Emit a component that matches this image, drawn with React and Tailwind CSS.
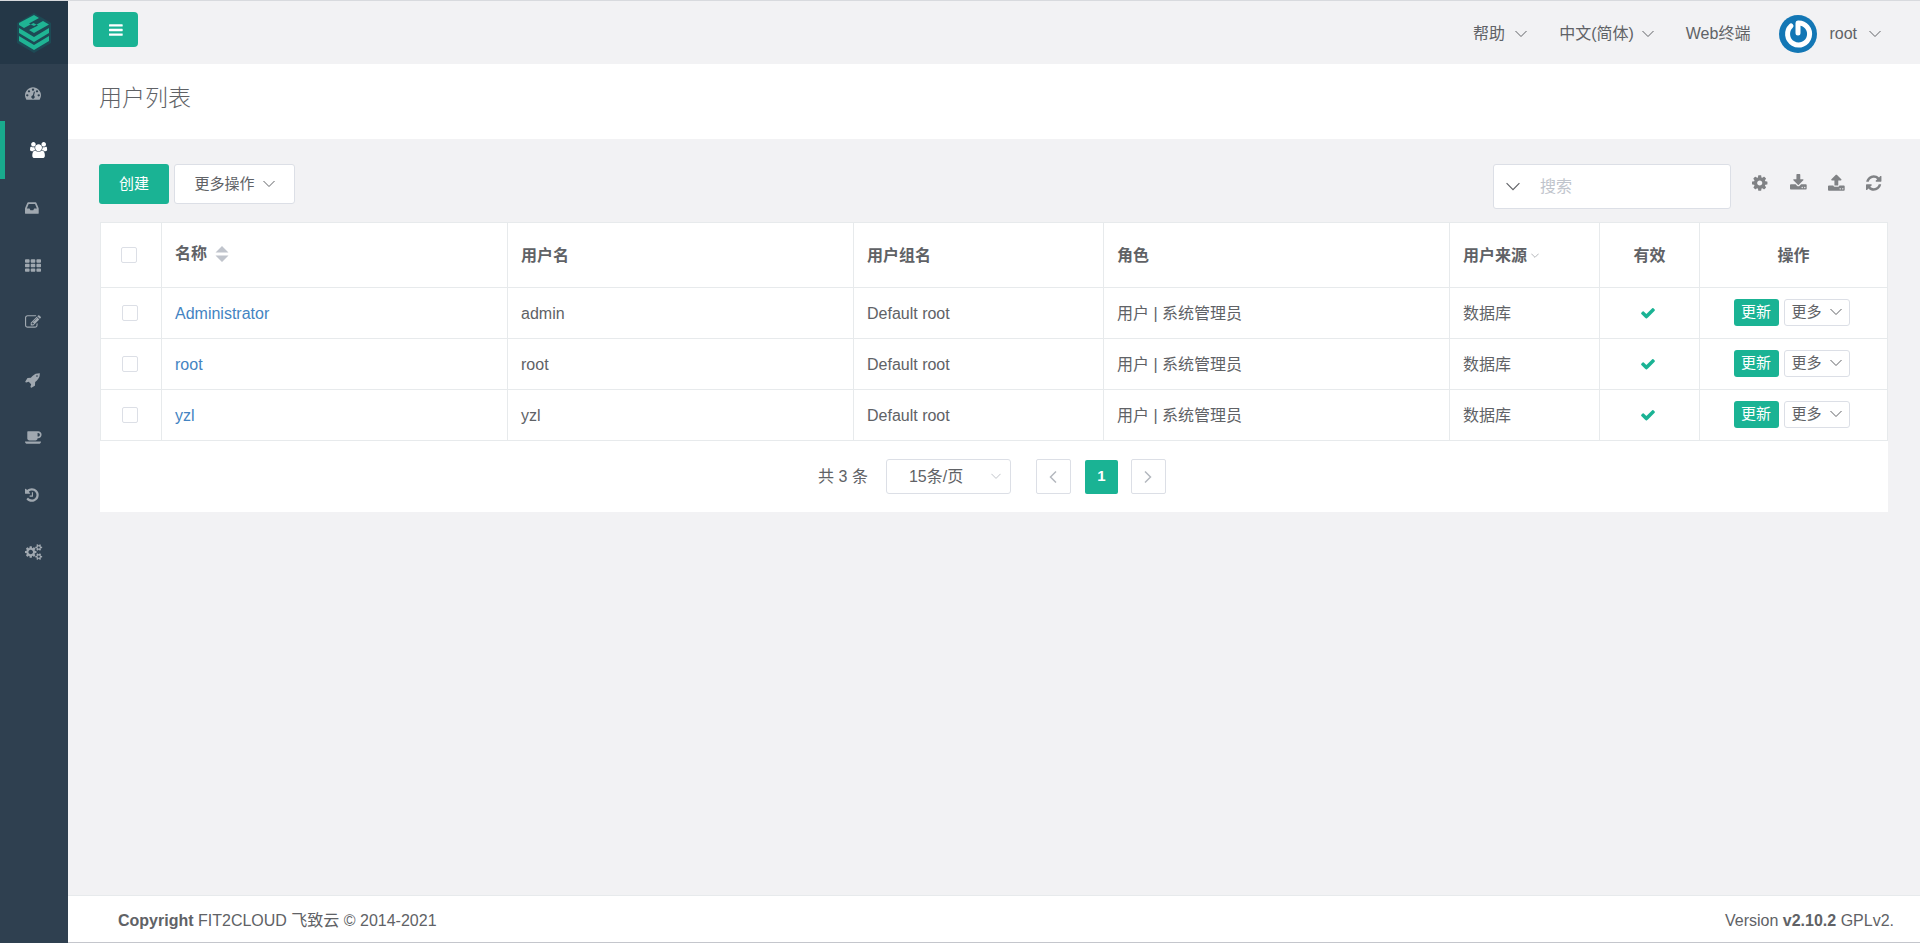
import React, { useState } from 'react';

const FONT = 'font-["Liberation_Sans","Noto_Sans_CJK_SC",sans-serif]';

const DISC = 'q0-53-37.5-90.5t-90.5-37.5-90.5 37.5-37.5 90.5 37.5 90.5 90.5 37.5 90.5-37.5 37.5-90.5z';
const SMALL_COG = 'v140q0 16-149 31-12 27-30 52 51 113 51 138 0 4-4 7-122 71-124 71-8 0-46-47t-52-68q-20 2-30 2t-30-2q-14 21-52 68t-46 47q-2 0-124-71-4-3-4-7 0-25 51-138-18-25-30-52-149-15-149-31v-140q0-16 149-31 13-29 30-52-51-113-51-138 0-4 4-7 4-2 35-20t59-34 30-16q8 0 46 46.5t52 67.5q20-2 30-2t30 2q51-71 92-112l6-2q4 0 124 70 4 3 4 7 0 25-51 138 17 23 30 52 149 15 149 31z';
const LED = 'q0-26-19-45t-45-19-45 19-19 45 19 45 45 19 45-19 19-45z';

const ICONS = {
    dashboard: {
        width: 1792,
        d: `M384 1152${DISC}m192-448${DISC}m428 481l101-382q6-26-7.5-48.5t-38.5-29.5-48 6.5-30 39.5l-101 382q-60 5-107 43.5t-63 98.5q-20 77 20 146t117 89 146-20 89-117q16-60-6-117t-72-91zm660-33${DISC}m-640-640${DISC}m448 192${DISC}m320 448q0 261-141 483-19 29-54 29h-1402q-35 0-54-29-141-221-141-483 0-182 71-348t191-286 286-191 348-71 348 71 286 191 191 286 71 348z`,
    },
    users: {
        width: 1920,
        d: 'M593 896q-162 5-265 128h-134q-82 0-138-40.5t-56-118.5q0-353 124-353 6 0 43.5 21t97.5 42.5 119 21.5q67 0 133-23-5 37-5 66 0 139 81 256zm1071 637q0 120-73 189.5t-194 69.5h-874q-121 0-194-69.5t-73-189.5q0-53 3.5-103.5t14-109 26.5-108.5 43-97.5 62-81 85.5-53.5 111.5-20q10 0 43 21.5t73 48 107 48 135 21.5 135-21.5 107-48 73-48 43-21.5q61 0 111.5 20t85.5 53.5 62 81 43 97.5 26.5 108.5 14 109 3.5 103.5zm-1024-1277q0 106-75 181t-181 75-181-75-75-181 75-181 181-75 181 75 75 181zm704 384q0 159-112.5 271.5t-271.5 112.5-271.5-112.5-112.5-271.5 112.5-271.5 271.5-112.5 271.5 112.5 112.5 271.5zm576 225q0 78-56 118.5t-138 40.5h-134q-103-123-265-128 81-117 81-256 0-29-5-66 66 23 133 23 59 0 119-21.5t97.5-42.5 43.5-21q124 0 124 353zm-128-609q0 106-75 181t-181 75-181-75-75-181 75-181 181-75 181 75 75 181z',
    },
    inbox: {
        width: 1536,
        x: 128,
        d: 'M1151 960h316q-1-3-2.5-8.5t-2.5-7.5l-212-496h-708l-212 496q-1 3-2.5 8.5t-2.5 7.5h316l95 192h320zm513 30v482q0 26-19 45t-45 19h-1408q-26 0-45-19t-19-45v-482q0-62 25-123l238-552q10-25 36.5-42t52.5-17h832q26 0 52.5 17t36.5 42l238 552q25 61 25 123z',
    },
    grid: {
        width: 1792,
        d: [256, 768, 1280].map((y) => [0, 640, 1280].map((x) => `M${x + 96} ${y}h320q40 0 68 28t28 68v192q0 40-28 68t-68 28h-320q-40 0-68-28t-28-68v-192q0-40 28-68t68-28z`).join('')).join(''),
    },
    edit: {
        width: 1792,
        d: 'M888 1184l116-116-152-152-116 116v56h96v96h56zm440-720q-16-16-33 1l-350 350q-17 17-1 33t33-1l350-350q17-17 1-33zm80 594v190q0 119-84.5 203.5t-203.5 84.5h-832q-119 0-203.5-84.5t-84.5-203.5v-832q0-119 84.5-203.5t203.5-84.5h832q63 0 117 25 15 7 18 23 3 17-9 29l-49 49q-14 14-32 8-23-6-45-6h-832q-66 0-113 47t-47 113v832q0 66 47 113t113 47h832q66 0 113-47t47-113v-126q0-13 9-22l64-64q15-15 35-7t20 29zm-96-738l288 288-672 672h-288v-288zm444 132l-92 92-288-288 92-92q28-28 68-28t68 28l152 152q28 28 28 68t-28 68z',
    },
    rocket: {
        width: 1664,
        d: 'M1440 448q0-40-28-68t-68-28-68 28-28 68 28 68 68 28 68-28 28-68zm224-288q0 249-75.5 430.5t-253.5 360.5q-81 80-195 176l-20 379q-2 16-16 26l-384 224q-7 4-16 4-12 0-23-9l-64-64q-13-14-8-32l85-276-281-281-276 85q-3 1-9 1-14 0-23-9l-64-64q-17-19-5-39l224-384q10-14 26-16l379-20q96-114 176-195 188-187 358-258t431-71q14 0 24 9.5t10 22.5z',
    },
    coffee: {
        width: 1920,
        d: 'M1664 640q0-80-56-136t-136-56h-64v384h64q80 0 136-56t56-136zm-1664 768h1792q0 106-75 181t-181 75h-1280q-106 0-181-75t-75-181zm1856-768q0 159-112.5 271.5t-271.5 112.5h-64v32q0 92-66 158t-158 66h-704q-92 0-158-66t-66-158v-736q0-26 19-45t45-19h1152q159 0 271.5 112.5t112.5 271.5z',
    },
    history: {
        width: 1536,
        x: 128,
        d: 'M1664 896q0 156-61 298t-164 245-245 164-298 61q-172 0-327-72.5t-264-204.5q-7-10-6.5-22.5t8.5-20.5l137-138q10-9 25-9 16 2 23 12 73 95 179 147t225 52q104 0 198.5-40.5t163.5-109.5 109.5-163.5 40.5-198.5-40.5-198.5-109.5-163.5-163.5-109.5-198.5-40.5q-98 0-188 35.5t-160 101.5l137 138q31 30 14 69-17 40-59 40h-448q-26 0-45-19t-19-45v-448q0-42 40-59 39-17 69 14l130 129q107-101 244.5-156.5t284.5-55.5q156 0 298 61t245 164 164 245 61 298zm-640-288v448q0 14-9 23t-23 9h-320q-14 0-23-9t-9-23v-64q0-14 9-23t23-9h224v-352q0-14 9-23t23-9h64q14 0 23 9t9 23z',
    },
    cogs: {
        width: 1920,
        d: `M896 896q0-106-75-181t-181-75-181 75-75 181 75 181 181 75 181-75 75-181zm768 512q0-52-38-90t-90-38-90 38-38 90q0 53 37.5 90.5t90.5 37.5 90.5-37.5 37.5-90.5zm0-1024q0-52-38-90t-90-38-90 38-38 90q0 53 37.5 90.5t90.5 37.5 90.5-37.5 37.5-90.5zm-384 421v185q0 10-7 19.5t-16 10.5l-155 24q-11 35-32 76 34 48 90 115 7 10 7 20 0 12-7 19-23 30-82.5 89.5t-78.5 59.5q-11 0-21-7l-115-90q-37 19-77 31-11 108-23 155-7 24-30 24h-186q-11 0-20-7.5t-10-17.5l-23-153q-34-10-75-31l-118 89q-7 7-20 7-11 0-21-8-144-133-144-160 0-9 7-19 10-14 41-53t47-61q-23-44-35-82l-152-24q-10-1-17-9.5t-7-19.5v-185q0-10 7-19.5t16-10.5l155-24q11-35 32-76-34-48-90-115-7-11-7-20 0-12 7-20 22-30 82-89t79-59q11 0 21 7l115 90q34-18 77-32 11-108 23-154 7-24 30-24h186q11 0 20 7.5t10 17.5l23 153q34 10 75 31l118-89q8-7 20-7 11 0 21 8 144 133 144 160 0 9-7 19-12 16-42 54t-45 60q23 48 34 82l152 23q10 2 17 10.5t7 19.5zm640 533${SMALL_COG}M1920 314${SMALL_COG}`,
    },
    bars: {
        width: 1536,
        x: 128,
        d: [1344, 832, 320].map((y) => `M1664 ${y}v128q0 26-19 45t-45 19h-1408q-26 0-45-19t-19-45v-128q0-26 19-45t45-19h1408q26 0 45 19t19 45z`).join(''),
    },
    cog: {
        width: 1536,
        x: 128,
        d: 'M1152 896q0-106-75-181t-181-75-181 75-75 181 75 181 181 75 181-75 75-181zm512-109v222q0 12-8 23t-20 13l-185 28q-19 54-39 91 35 50 107 138 10 12 10 25t-9 23q-27 37-99 108t-94 71q-12 0-26-9l-138-108q-44 23-91 38-16 136-29 186-7 28-36 28h-222q-14 0-24.5-8.5t-11.5-21.5l-28-184q-49-16-90-37l-141 107q-10 9-25 9-14 0-25-11-126-114-165-168-7-10-7-23 0-12 8-23 15-21 51-66.5t54-70.5q-27-50-41-99l-183-27q-13-2-21-12.5t-8-23.5v-222q0-12 8-23t19-13l186-28q14-46 39-92-40-57-107-138-10-12-10-24 0-10 9-23 26-36 98.5-107.5t94.5-71.5q13 0 26 10l138 107q44-23 91-38 16-136 29-186 7-28 36-28h222q14 0 24.5 8.5t11.5 21.5l28 184q49 16 90 37l142-107q9-9 24-9 13 0 25 10 129 119 165 170 7 8 7 22 0 12-8 23-15 21-51 66.5t-54 70.5q26 50 41 98l183 28q13 2 21 12.5t8 23.5z',
    },
    download: {
        width: 1664,
        x: 64,
        d: `M1344 1344${LED}m256 0${LED}m128-224v320q0 40-28 68t-68 28h-1472q-40 0-68-28t-28-68v-320q0-40 28-68t68-28h465l135 136q58 56 136 56t136-56l136-136h464q40 0 68 28t28 68zm-325-569q17 41-14 70l-448 448q-18 19-45 19t-45-19l-448-448q-31-29-14-70 17-39 59-39h256v-448q0-26 19-45t45-19h256q26 0 45 19t19 45v448h256q42 0 59 39z`,
    },
    upload: {
        width: 1664,
        x: 64,
        d: `M1344 1472${LED}m256 0${LED}m128-224v320q0 40-28 68t-68 28h-1472q-40 0-68-28t-28-68v-320q0-40 28-68t68-28h427q21 56 70.5 92t110.5 36h256q61 0 110.5-36t70.5-92h427q40 0 68 28t28 68zm-325-648q-17 40-59 40h-256v448q0 26-19 45t-45 19h-256q-26 0-45-19t-19-45v-448h-256q-42 0-59-40-17-39 14-69l448-448q18-19 45-19t45 19l448 448q31 30 14 69z`,
    },
    refresh: {
        width: 1536,
        x: 128,
        d: 'M1639 1056q0 5-1 7-64 268-268 434.5t-478 166.5q-146 0-282.5-55t-243.5-157l-129 129q-19 19-45 19t-45-19-19-45v-448q0-26 19-45t45-19h448q26 0 45 19t19 45-19 45l-137 137q71 66 161 102t187 36q134 0 250-65t186-179q11-17 53-117 8-23 30-23h192q13 0 22.5 9.5t9.5 22.5zm25-800v448q0 26-19 45t-45 19h-448q-26 0-45-19t-19-45 19-45l138-138q-148-137-349-137-134 0-250 65t-186 179q-11 17-53 117-8 23-30 23h-199q-13 0-22.5-9.5t-9.5-22.5v-7q65-268 270-434.5t480-166.5q146 0 284 55.5t245 156.5l130-129q19-19 45-19t45 19 19 45z',
    },
    check: {
        width: 1792,
        d: 'M1671 566q0 40-28 68l-724 724-136 136q-28 28-68 28t-68-28l-136-136-362-362q-28-28-28-68t28-68l136-136q28-28 68-28t68 28l294 295 656-657q28-28 68-28t68 28l136 136q28 28 28 68z',
    },
};

const Icon = ({ name, className = 'h-4' }) => {
    const { width, x = 0, d } = ICONS[name];
    return (
        <svg viewBox={`${x} 0 ${width} 1792`} className={`w-auto overflow-visible ${className}`} fill="currentColor" aria-hidden="true">
            <path d={d} />
        </svg>
    );
};

const Chevron = ({ className = 'w-3' }) => (
    <svg viewBox="0 0 12 8" className={`shrink-0 ${className}`} fill="none" stroke="currentColor" aria-hidden="true">
        <path d="M0.5 1L6 6.5L11.5 1" />
    </svg>
);

const Logo = () => (
    <svg viewBox="0 0 36 42" className="w-9" aria-hidden="true">
        <path d="M18 1L35 11V31L18 41L1 31V11z" fill="#1d4a55" />
        <g fill="#1fb494">
            <path d="M3 11L18 3L23 6L13 11.500L18 14L27 9L33 12.500L18 21L13 18L22 13.500L17.500 11L8 16L3 13z" />
            <path d="M3 16L18 25L33 16V21L18 30L3 21z" />
            <path d="M3 24L18 33L33 24V29L18 38L3 29z" />
        </g>
    </svg>
);

const Avatar = () => (
    <svg viewBox="0 0 38 38" className="w-[38px]" fill="none" aria-hidden="true">
        <circle cx="19" cy="19" r="19" fill="#1377b5" />
        <path d="M12 11A11 11 0 1 0 19 8V18" stroke="#fff" strokeWidth="5" strokeLinecap="round" strokeLinejoin="round" />
    </svg>
);

const navItems = [
    { icon: 'dashboard', label: '仪表盘' },
    { icon: 'users', label: '用户管理' },
    { icon: 'inbox', label: '资产管理' },
    { icon: 'grid', label: '应用管理' },
    { icon: 'edit', label: '权限管理' },
    { icon: 'rocket', label: '会话管理' },
    { icon: 'coffee', label: '作业中心' },
    { icon: 'history', label: '日志审计' },
    { icon: 'cogs', label: '系统设置' },
];

const tools = [
    { icon: 'cog', label: '设置' },
    { icon: 'download', label: '导出' },
    { icon: 'upload', label: '导入' },
    { icon: 'refresh', label: '刷新' },
];

const users = [
    { name: 'Administrator', username: 'admin' },
    { name: 'root', username: 'root' },
    { name: 'yzl', username: 'yzl' },
];

const Sidebar = () => (
    <aside className="w-[68px] shrink-0 bg-[#2f4050]">
        <a href="#home" aria-label="JumpServer" className="flex h-[63px] items-center justify-center bg-[#243747] pr-px">
            <Logo />
        </a>
        <nav className="grid h-[517px] auto-rows-fr text-[#a0a8b0]">
            {navItems.map((item) => (
                <a
                    key={item.icon}
                    href={`#${item.icon}`}
                    aria-label={item.label}
                    className={`flex items-center pl-[25px] ${item.icon === 'users' ? 'border-l-5 border-[#19aa8d] text-white' : ''}`}
                >
                    <Icon name={item.icon} />
                </a>
            ))}
        </nav>
    </aside>
);

const Topbar = () => (
    <header className="flex h-[63px] items-start justify-between pr-[39px] pl-[25px] text-base">
        <button type="button" aria-label="菜单" className="mt-[11px] flex h-[35px] w-[45px] items-center justify-center rounded bg-[#1ab394] text-white">
            <Icon name="bars" />
        </button>
        <div className="flex h-full items-center pt-0.5">
            <button type="button" className="flex items-center gap-2.5">
                帮助 <Chevron />
            </button>
            <button type="button" className="ml-8 flex items-center gap-2">
                中文(简体) <Chevron />
            </button>
            <a href="#terminal" className="ml-8">Web终端</a>
            <button type="button" className="ml-[29px] flex items-center gap-3">
                <Avatar /> <span>root</span> <Chevron />
            </button>
        </div>
    </header>
);

const checkboxStyle = 'block mx-auto size-4 appearance-none rounded-xs border border-[#dcdfe6] bg-white checked:bg-[#1ab394]';

const UserTable = () => {
    const [checked, setChecked] = useState([]);

    const toggle = (name) => {
        setChecked(checked.includes(name) ? checked.filter((n) => n !== name) : [...checked, name]);
    };

    const cell = 'border-r border-b border-[#e7eaec]';
    const th = `${cell} pt-0.5 pl-[13px] text-left font-bold`;
    const td = `${cell} pt-0.5 pl-[13px]`;

    return (
        <table className="w-full table-fixed border-separate border-spacing-0 border-t border-l border-[#e7eaec] text-base">
            <colgroup>
                <col className="w-[61px]" />
                <col />
                <col />
                <col className="w-[250px]" />
                <col />
                <col className="w-[150px]" />
                <col className="w-[100px]" />
                <col className="w-[188px]" />
            </colgroup>
            <thead>
                <tr className="h-[65px]">
                    <th className={`${cell} pr-1`}>
                        <input
                            type="checkbox"
                            aria-label="全选"
                            className={checkboxStyle}
                            checked={checked.length === users.length}
                            onChange={(e) => setChecked(e.target.checked ? users.map((u) => u.name) : [])}
                        />
                    </th>
                    <th className={`${cell} pb-0.5 pl-[13px]`}>
                        <button type="button" className="flex items-center gap-2">
                            名称
                            <svg viewBox="0 0 14 16" className="w-3.5 text-[#c0c4cc]" fill="currentColor" aria-hidden="true">
                                <path d="M7 0L13.500 6.500H0.500zM7 16L0.500 9.500H13.500z" />
                            </svg>
                        </button>
                    </th>
                    <th className={th}>用户名</th>
                    <th className={th}>用户组名</th>
                    <th className={th}>角色</th>
                    <th className={th}>
                        <span className="flex items-center gap-1">
                            用户来源 <Chevron className="w-2 text-[#909399]" />
                        </span>
                    </th>
                    <th className={`${cell} pt-0.5`}>有效</th>
                    <th className={`${cell} pt-0.5`}>操作</th>
                </tr>
            </thead>
            <tbody>
                {users.map((user) => (
                    <tr key={user.name} className="h-[51px]">
                        <td className={`${cell} pr-0.5`}>
                            <input
                                type="checkbox"
                                aria-label={user.name}
                                className={checkboxStyle}
                                checked={checked.includes(user.name)}
                                onChange={() => toggle(user.name)}
                            />
                        </td>
                        <td className={td}>
                            <a href={`#${user.name}`} className="text-[#4484c2]">{user.name}</a>
                        </td>
                        <td className={td}>{user.username}</td>
                        <td className={td}>Default root</td>
                        <td className={td}>用户 | 系统管理员</td>
                        <td className={td}>数据库</td>
                        <td className={`${cell} pr-1 text-[#1ab394]`}>
                            <Icon name="check" className="mx-auto h-4" />
                        </td>
                        <td className={`${cell} pr-1 pb-0.5`}>
                            <div className="flex justify-center gap-[5px] text-[15px]">
                                <button type="button" className="h-[27px] w-[45px] rounded-[3px] bg-[#1ab394] text-white">更新</button>
                                <button type="button" className="flex h-[27px] w-[66px] items-center justify-center gap-2 rounded-[3px] border border-[#dcdfe6] bg-white">
                                    更多 <Chevron />
                                </button>
                            </div>
                        </td>
                    </tr>
                ))}
            </tbody>
        </table>
    );
};

const Pagination = () => (
    <div className="flex h-[71px] items-center justify-center pr-1 text-base">
        <span>共 3 条</span>
        <div className="relative ml-[18px]">
            <select aria-label="每页条数" className="block h-[35px] w-[125px] appearance-none rounded-[3px] border border-[#dcdfe6] bg-white pl-[22px]">
                <option>15条/页</option>
                <option>30条/页</option>
                <option>50条/页</option>
            </select>
            <Chevron className="pointer-events-none absolute top-3.5 right-2.5 w-2.5 text-[#b4b8bf]" />
        </div>
        <button type="button" aria-label="上一页" className="ml-[25px] flex size-[35px] items-center justify-center rounded-xs border border-[#dcdfe6] text-[#b4b8bf]">
            <Chevron className="w-3 rotate-90 stroke-[1.5]" />
        </button>
        <button type="button" className="ml-3.5 h-[34px] w-[33px] rounded-xs bg-[#1ab394] text-[15px] font-bold text-white">1</button>
        <button type="button" aria-label="下一页" className="ml-[13px] flex size-[35px] items-center justify-center rounded-xs border border-[#dcdfe6] text-[#b4b8bf]">
            <Chevron className="w-3 -rotate-90 stroke-[1.5]" />
        </button>
    </div>
);

const App = () => {
    const [search, setSearch] = useState('');

    return (
        <div className={`flex min-h-screen border-t border-[#d8dade] bg-[#f2f2f4] text-[#606266] ${FONT}`}>
            <Sidebar />
            <div className="flex min-w-0 flex-1 flex-col">
                <Topbar />
                <div className="flex h-[75px] items-center bg-white px-[31px] pb-1.5">
                    <h1 className="text-[23px] font-light">用户列表</h1>
                </div>

                <main className="flex-1 pt-[25px] pr-8 pl-[31px]">
                    <div className="flex items-start justify-between">
                        <div className="flex gap-[5px] text-[15px]">
                            <button type="button" className="h-10 w-[70px] rounded-[3px] bg-[#1ab394] text-white">创建</button>
                            <button type="button" className="flex h-10 w-[121px] items-center justify-center gap-2 rounded-[3px] border border-[#dcdfe6] bg-white">
                                更多操作 <Chevron />
                            </button>
                        </div>
                        <div className="flex items-start pr-[5px]">
                            <div className="flex h-[45px] w-[238px] items-center rounded-[3px] border border-[#dcdfe6] bg-white pl-3">
                                <button type="button" aria-label="搜索条件">
                                    <Chevron className="w-3.5" />
                                </button>
                                <input
                                    type="text"
                                    aria-label="搜索"
                                    placeholder="搜索"
                                    value={search}
                                    onChange={(e) => setSearch(e.target.value)}
                                    className="ml-5 min-w-0 flex-1 text-base outline-none placeholder:text-[#c0c4cc]"
                                />
                            </div>
                            <div className="ml-5 flex h-[38px] items-center gap-5 text-[#808285]">
                                {tools.map((tool) => (
                                    <button key={tool.icon} type="button" aria-label={tool.label} className="flex w-[18px] justify-center">
                                        <Icon name={tool.icon} className="h-[18px]" />
                                    </button>
                                ))}
                            </div>
                        </div>
                    </div>

                    <div className="mt-[13px] ml-px bg-white">
                        <UserTable />
                        <Pagination />
                    </div>
                </main>

                <footer className="flex h-12 items-center justify-between border-t border-b border-[#e7eaec] border-b-[#c4c6cc] bg-white pt-1 pr-[26px] pl-[50px] text-base">
                    <div><strong>Copyright</strong> FIT2CLOUD 飞致云 © 2014-2021</div>
                    <div>Version <strong>v2.10.2</strong> GPLv2.</div>
                </footer>
            </div>
        </div>
    );
};

export default App;
